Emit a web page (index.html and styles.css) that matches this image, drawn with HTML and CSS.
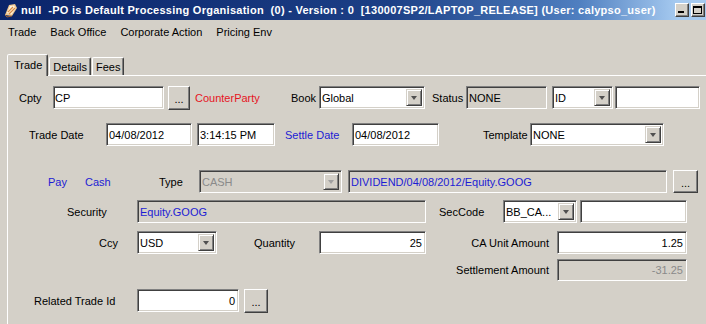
FILE: index.html
```html
<!DOCTYPE html>
<html>
<head>
<meta charset="utf-8">
<link rel="stylesheet" href="styles.css">
</head>
<body>
<div class="titlebar">
  <svg class="app-icon" viewBox="0 0 16 16">
    <path d="M2 13 L6 3 L12 2 L14 6 L9 14 Z" fill="#f0c890"/>
    <path d="M4 11 L7 4 L11 3.5 L12.5 6.5 L8.5 12.5 Z" fill="#fff4e0"/>
    <path d="M5 10 L10 5 M6 12 L12 6" stroke="#d88a40" stroke-width="1.2"/>
    <path d="M2 13 L4 15 L9 14" fill="none" stroke="#a06030" stroke-width="1"/>
  </svg>
  <div class="title">null  -PO is Default Processing Organisation  (0) - Version : 0  [130007SP2/LAPTOP_RELEASE] (User: calypso_user)</div>
  <div class="winbtns">
    <div class="winbtn"><span class="min-glyph"></span></div>
    <div class="winbtn"><span class="max-glyph"></span></div>
  </div>
</div>
<div class="menubar">
  <span class="menu-item">Trade</span>
  <span class="menu-item">Back Office</span>
  <span class="menu-item">Corporate Action</span>
  <span class="menu-item">Pricing Env</span>
</div>
<div class="tabs">
  <div class="tab selected">Trade</div>
  <div class="tab">Details</div>
  <div class="tab">Fees</div>
</div>
<div class="panel">
  <div class="row r1">
    <span class="lbl lbl-cpty">Cpty</span>
    <div class="field f-cpty">CP</div>
    <div class="btn btn-cpty">...</div>
    <span class="lbl lbl-cpname">CounterParty</span>
    <span class="lbl lbl-book">Book</span>
    <div class="combo cb-book"><span class="combo-text">Global</span><span class="arrow"></span></div>
    <span class="lbl lbl-status">Status</span>
    <div class="field ro f-status">NONE</div>
    <div class="combo cb-id"><span class="combo-text">ID</span><span class="arrow"></span></div>
    <div class="field f-id"></div>
  </div>
  <div class="row r2">
    <span class="lbl lbl-tdate">Trade Date</span>
    <div class="field f-tdate">04/08/2012</div>
    <div class="field f-ttime">3:14:15 PM</div>
    <span class="lbl link lbl-sdate">Settle Date</span>
    <div class="field f-sdate">04/08/2012</div>
    <span class="lbl lbl-tmpl">Template</span>
    <div class="combo cb-tmpl"><span class="combo-text">NONE</span><span class="arrow"></span></div>
  </div>
  <div class="row r3">
    <span class="lbl link lbl-pay">Pay</span>
    <span class="lbl link lbl-cash">Cash</span>
    <span class="lbl lbl-type">Type</span>
    <div class="combo disabled cb-type"><span class="combo-text">CASH</span><span class="arrow"></span></div>
    <div class="field ro blue f-ca">DIVIDEND/04/08/2012/Equity.GOOG</div>
    <div class="btn btn-ca">...</div>
  </div>
  <div class="row r4">
    <span class="lbl lbl-sec">Security</span>
    <div class="field ro blue f-sec">Equity.GOOG</div>
    <span class="lbl lbl-seccode">SecCode</span>
    <div class="combo cb-seccode"><span class="combo-text">BB_CA...</span><span class="arrow"></span></div>
    <div class="field f-seccode"></div>
  </div>
  <div class="row r5">
    <span class="lbl lbl-ccy">Ccy</span>
    <div class="combo cb-ccy"><span class="combo-text">USD</span><span class="arrow"></span></div>
    <span class="lbl lbl-qty">Quantity</span>
    <div class="field num f-qty">25</div>
    <span class="lbl rlbl lbl-caunit">CA Unit Amount</span>
    <div class="field num f-amount">1.25</div>
  </div>
  <div class="row r6">
    <span class="lbl rlbl lbl-settle">Settlement Amount</span>
    <div class="field num dis f-amount">-31.25</div>
  </div>
  <div class="row r7">
    <span class="lbl lbl-rel">Related Trade Id</span>
    <div class="field num f-rel">0</div>
    <div class="btn btn-rel">...</div>
  </div>
</div>
</body>
</html>
```
FILE: styles.css
```css
* { box-sizing: border-box; }
html, body { margin: 0; padding: 0; }
body {
  width: 706px;
  height: 324px;
  overflow: hidden;
  background: #d4d0c8;
  font-family: "Liberation Sans", Arial, sans-serif;
  font-size: 11px;
  color: #000;
}

/* title bar */
.titlebar {
  height: 20px;
  display: flex;
  align-items: center;
  padding-left: 3px;
  background: linear-gradient(to right, #0a246a 0%, #1c3f86 55%, #4f7fc0 82%, #a6caf0 96%);
  color: #fff;
  font-weight: bold;
}
.app-icon { width: 16px; height: 16px; flex: none; }
.title {
  margin-left: 2px;
  flex: 1;
  white-space: pre;
  overflow: hidden;
  letter-spacing: 0.27px;
}
.winbtns { display: flex; gap: 2px; margin-right: 1px; flex: none; }
.winbtn {
  width: 14px;
  height: 14px;
  background: #d4d0c8;
  border: 1px solid;
  border-color: #fff #404040 #404040 #fff;
  box-shadow: inset -1px -1px 0 #808080;
  display: flex;
  align-items: flex-end;
  justify-content: center;
}
.min-glyph { width: 6px; height: 2px; background: #000; margin-bottom: 3px; margin-right: 2px; }
.max-glyph {
  width: 9px; height: 8px;
  border: 1px solid #000; border-top-width: 2px;
  margin-bottom: 2px; margin-right: 1px;
}

/* menu */
.menubar {
  height: 24px;
  display: flex;
  align-items: center;
  gap: 14px;
  padding-left: 8px;
}

/* tabs */
.tabs {
  display: flex;
  align-items: flex-end;
  height: 21px;
  margin-top: 10px;
  margin-left: 7px;
  position: relative;
  z-index: 1;
}
.tab {
  height: 18px;
  padding: 1px 3px 0;
  margin-left: 1px;
  border: 1px solid;
  border-bottom: none;
  border-color: #fff #404040 transparent #fff;
  box-shadow: inset -1px 0 0 #808080;
  border-radius: 2px 2px 0 0;
  display: flex;
  align-items: center;
}
.tab.selected {
  height: 22px;
  margin-bottom: -1px;
  margin-left: 0;
  padding: 0 5px 2px 6px;
  background: #d4d0c8;
}

/* panel */
.panel {
  margin-left: 7px;
  height: 249px;
  border-top: 1px solid #fff;
  border-left: 1px solid #fff;
  padding-top: 10px;
}
.row {
  display: flex;
  align-items: center;
  height: 23px;
}
.r2 { margin-top: 14px; }
.r3 { margin-top: 24px; }
.r4 { margin-top: 7px; }
.r5 { margin-top: 8px; }
.r6 { margin-top: 5px; height: 22px; }
.r7 { margin-top: 8px; }

.lbl { flex: none; white-space: nowrap; }
.link { color: #1c1cd4; }
.rlbl { text-align: right; padding-right: 8px; }

.field {
  flex: none;
  height: 100%;
  background: #fff;
  border: 1px solid;
  border-color: #808080 #fff #fff #808080;
  box-shadow: inset 1px 1px 0 #404040, inset -1px -1px 0 #d4d0c8;
  padding: 0 2px 0 2px;
  display: flex;
  align-items: center;
  white-space: nowrap;
  overflow: hidden;
}
.field.ro { background: #d4d0c8; }
.field.blue { color: #1c1cd4; }
.field.num { justify-content: flex-end; padding-right: 3px; }
.field.dis { background: #d4d0c8; color: #8a8a8a; }

.combo {
  flex: none;
  height: 100%;
  background: #fff;
  border: 1px solid;
  border-color: #808080 #fff #fff #808080;
  box-shadow: inset 1px 1px 0 #404040, inset -1px -1px 0 #d4d0c8;
  display: flex;
  align-items: center;
  padding: 2px 2px 2px 2px;
}
.combo.disabled { background: #d4d0c8; color: #8a8a8a; }
.combo-text { flex: 1; white-space: nowrap; overflow: hidden; }
.arrow {
  flex: none;
  width: 16px;
  height: 100%;
  background: #d4d0c8;
  border: 1px solid;
  border-color: #d4d0c8 #404040 #404040 #d4d0c8;
  box-shadow: inset 1px 1px 0 #fff, inset -1px -1px 0 #808080;
  display: flex;
  align-items: center;
  justify-content: center;
}
.arrow::after {
  content: "";
  width: 0; height: 0;
  border-left: 3.5px solid transparent;
  border-right: 3.5px solid transparent;
  border-top: 4px solid #505050;
}
.combo.disabled .arrow::after { border-top-color: #a0a0a0; }

.btn {
  flex: none;
  height: 24px;
  background: #d4d0c8;
  border: 1px solid;
  border-color: #fff #404040 #404040 #fff;
  box-shadow: inset -1px -1px 0 #808080;
  display: flex;
  align-items: center;
  justify-content: center;
  padding-top: 3px;
}

/* row 1 */
.lbl-cpty { margin-left: 11px; width: 34px; }
.f-cpty { width: 111px; padding-left: 1px; }
.btn-cpty { margin-left: 4px; width: 22px; }
.lbl-cpname { margin-left: 5px; width: 96px; color: #e6141e; }
.lbl-book { width: 28px; }
.cb-book { width: 106px; }
.lbl-status { margin-left: 7px; width: 34px; }
.f-status { width: 81px; }
.cb-id { margin-left: 5px; width: 61px; }
.f-id { margin-left: 2px; width: 85px; }

/* row 2 */
.lbl-tdate { margin-left: 21px; width: 77px; }
.f-tdate { width: 86px; }
.f-ttime { margin-left: 5px; width: 78px; }
.lbl-sdate { margin-left: 10px; width: 67px; }
.f-sdate { width: 87px; }
.lbl-tmpl { margin-left: 44px; width: 47px; }
.cb-tmpl { width: 134px; }

/* row 3 */
.lbl-pay { margin-left: 40px; width: 37px; }
.lbl-cash { width: 74px; }
.lbl-type { width: 40px; }
.cb-type { width: 143px; }
.f-ca { margin-left: 6px; width: 319px; }
.btn-ca { margin-left: 6px; width: 25px; height: 23px; }

/* row 4 */
.lbl-sec { margin-left: 59px; width: 70px; }
.f-sec { width: 289px; }
.lbl-seccode { margin-left: 13px; width: 64px; }
.cb-seccode { width: 74px; }
.f-seccode { margin-left: 3px; width: 107px; }

/* row 5 */
.lbl-ccy { margin-left: 91px; width: 38px; }
.cb-ccy { width: 80px; }
.lbl-qty { margin-left: 37px; width: 65px; }
.f-qty { width: 107px; }
.lbl-caunit { margin-left: 14px; width: 117px; }
.f-amount { width: 130px; }

/* row 6 */
.lbl-settle { margin-left: 432px; width: 117px; }

/* row 7 */
.lbl-rel { margin-left: 26px; width: 103px; }
.f-rel { width: 102px; }
.btn-rel { margin-left: 5px; width: 24px; }
```
